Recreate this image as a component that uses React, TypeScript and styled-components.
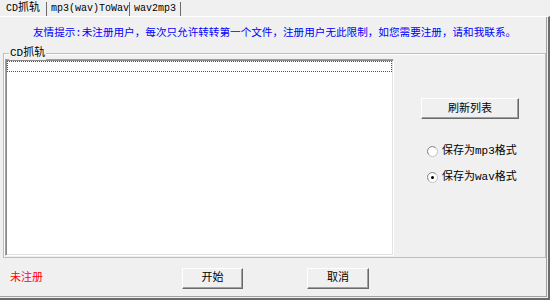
import React from "react";
import styled, { createGlobalStyle } from "styled-components";

const FONT = `"Liberation Mono", "Noto Sans CJK SC", monospace`;

const Global = createGlobalStyle`
  html, body { margin: 0; padding: 0; background: #f0f0f0; }
  body { font-family: ${FONT}; font-size: 11px; }
`;

const Window = styled.div`
  width: 550px;
  height: 300px;
  background: #f0f0f0;
  display: flex;
  flex-direction: column;
  overflow: hidden;
  color: #000;
  font-family: ${FONT};
  font-size: 11px;
`;

const TabStrip = styled.div`
  display: flex;
  height: 16px;
  align-items: flex-start;
`;

const Tab = styled.div<{ $w: number; $pad: number }>`
  width: ${(p) => p.$w}px;
  box-sizing: border-box;
  margin-top: 2px;
  height: 14px;
  line-height: 13px;
  padding-left: ${(p) => p.$pad}px;
  border-right: 1px solid #6b6b6b;
  white-space: nowrap;
  font-size: 10px;
`;

const TabCjk = styled.span`
  font-size: 11px;
`;

const Page = styled.div`
  flex: 1;
  display: flex;
  flex-direction: column;
  box-sizing: border-box;
  border-top: 1px solid #ffffff;
  border-right: 2px solid #6b6b6b;
  border-bottom: 2px solid #6b6b6b;
`;

const PageInner = styled.div`
  flex: 1;
  display: flex;
  flex-direction: column;
  margin: 0 1px 1px 0;
  border-right: 1px solid #a0a0a0;
  border-bottom: 1px solid #a0a0a0;
`;

const Notice = styled.div`
  margin: 10px 0 0 33px;
  height: 13px;
  line-height: 13px;
  color: #0000ff;
  font-size: 10.6px;
  white-space: nowrap;
`;

const GroupBox = styled.div`
  position: relative;
  margin: 13px 0 0 3px;
  width: 543px;
  box-sizing: border-box;
  padding: 5px 1px 1px 1px;
  border: 1px solid #bdbdbd;
  box-shadow: inset 1px 1px 0 #ffffff;
`;

const GroupLabel = styled.span`
  position: absolute;
  top: -7px;
  left: 5px;
  padding: 0 1px;
  line-height: 13px;
  background: #f0f0f0;
`;

const GroupBody = styled.div`
  display: flex;
  height: 197px;
`;

const ListBox = styled.div`
  width: 389px;
  box-sizing: border-box;
  background: #ffffff;
  border: 1px solid;
  border-color: #a0a0a0 #ffffff #ffffff #a0a0a0;
  box-shadow: inset 1px 1px 0 #8a8a8a, inset -1px -1px 0 #e3e3e3;
  padding: 1px;
`;

const FocusRow = styled.div`
  height: 11px;
  box-sizing: border-box;
  border: 1px dotted #555555;
`;

const SidePanel = styled.div`
  flex: 1;
  display: flex;
  flex-direction: column;
  align-items: flex-start;
`;

const Button = styled.button<{ $w: number }>`
  width: ${(p) => p.$w}px;
  height: 21px;
  box-sizing: border-box;
  padding: 0;
  background: #f0f0f0;
  border: 1px solid;
  border-color: #ffffff #696969 #696969 #ffffff;
  box-shadow: inset -1px -1px 0 #a0a0a0;
  font-family: ${FONT};
  font-size: 11px;
  color: #000;
  line-height: 18px;
`;

const RefreshButton = styled(Button)`
  margin: 39px 0 0 27px;
`;

const RadioGroup = styled.div`
  margin: 26px 0 0 33px;
  display: flex;
  flex-direction: column;
  gap: 13px;
`;

const RadioRow = styled.label`
  display: flex;
  align-items: center;
  gap: 4px;
  height: 13px;
  line-height: 13px;
  white-space: nowrap;
`;

const Footer = styled.div`
  flex: 1;
  display: flex;
  align-items: center;
  padding: 2px 0 0 10px;
`;

const Status = styled.div`
  width: 172px;
  color: #ff0000;
  line-height: 13px;
`;

const CancelButton = styled(Button)`
  margin-left: 64px;
`;

const RadioIcon = ({ checked }: { checked?: boolean }) => (
  <svg width="11" height="11" viewBox="0 0 11 11">
    <circle cx="5.5" cy="5.5" r="5" fill="#ffffff" stroke="#c0c0c0" strokeWidth="1" />
    <path d="M1.9 8.6 A4.5 4.5 0 0 1 8.6 1.9" fill="none" stroke="#909090" strokeWidth="1" />
    {checked && <circle cx="5.5" cy="5.5" r="1.5" fill="#000000" />}
  </svg>
);

export default function App() {
  return (
    <>
      <Global />
      <Window>
        <TabStrip>
          <Tab $w={47} $pad={6}>
            CD<TabCjk>抓轨</TabCjk>
          </Tab>
          <Tab $w={83} $pad={4}>mp3(wav)ToWav</Tab>
          <Tab $w={51} $pad={4}>wav2mp3</Tab>
        </TabStrip>
        <Page>
          <PageInner>
            <Notice>
              友情提示:未注册用户，每次只允许转转第一个文件，注册用户无此限制，如您需要注册，请和我联系。
            </Notice>
            <GroupBox>
              <GroupLabel>CD抓轨</GroupLabel>
              <GroupBody>
                <ListBox>
                  <FocusRow />
                </ListBox>
                <SidePanel>
                  <RefreshButton $w={98}>刷新列表</RefreshButton>
                  <RadioGroup>
                    <RadioRow>
                      <RadioIcon />
                      保存为mp3格式
                    </RadioRow>
                    <RadioRow>
                      <RadioIcon checked />
                      保存为wav格式
                    </RadioRow>
                  </RadioGroup>
                </SidePanel>
              </GroupBody>
            </GroupBox>
            <Footer>
              <Status>未注册</Status>
              <Button $w={61}>开始</Button>
              <CancelButton $w={62}>取消</CancelButton>
            </Footer>
          </PageInner>
        </Page>
      </Window>
    </>
  );
}
